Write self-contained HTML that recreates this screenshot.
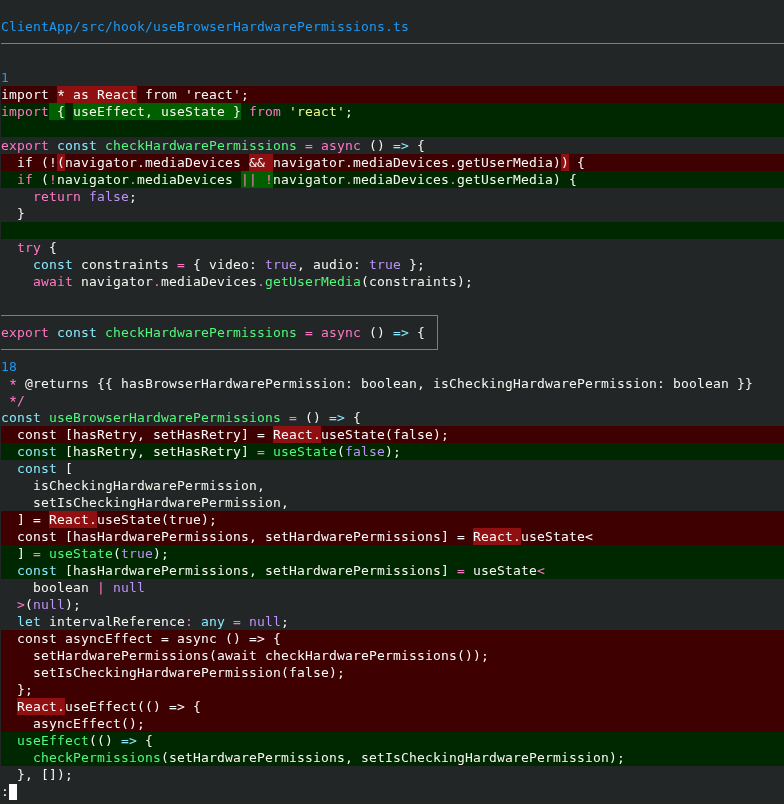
<!DOCTYPE html><html><head><meta charset="utf-8"><title>delta diff</title><style>
html,body{margin:0;padding:0;background:#232627;}
body{width:784px;height:804px;overflow:hidden;position:relative;
 font-family:"DejaVu Sans Mono","Liberation Mono",monospace;font-size:13px;line-height:17px;letter-spacing:0.1733px;color:#f8f8f2;
 -webkit-font-smoothing:antialiased;font-kerning:none;font-variant-ligatures:none;}
#t{position:absolute;left:0;top:1px;width:784px;will-change:transform;}
.r{height:17px;white-space:pre;padding-left:1px;margin-left:0;position:relative;}
.m{background:linear-gradient(#3f0001,#3f0001) 1px 0/100% 100% no-repeat;}
.a{background:linear-gradient(#002800,#002800) 1px 0/100% 100% no-repeat;}
.r span{display:inline-block;height:17px;vertical-align:top;}
.me{background:#901011;}
.ae{background:#006000;}
.w{color:#f8f8f2}.n{color:#fcfcfc}.k{color:#ff79c6}.c{color:#8be9fd}.g{color:#50fa7b}.y{color:#f1fa8c}.p{color:#bd93f9}.b{color:#1d99f3}
.hl{position:absolute;height:1px;background:#1d99f3;}
.vl{position:absolute;width:1px;background:#1d99f3;}
.hid{color:transparent;}
.ast{display:inline-block;height:17px;vertical-align:top;text-align:center;letter-spacing:0;font-weight:normal;font-family:"Liberation Mono",monospace;font-size:16px;line-height:17px;position:relative;top:4px;margin:0 -1px;width:10px;}
#cur{position:absolute;left:9px;top:784px;width:8px;height:16px;background:#fcfcfc;}
</style></head><body><div id="t">
<div class="r"></div>
<div class="r"><span class="b" style="width:408px">ClientApp/src/hook/useBrowserHardwarePermissions.ts</span></div>
<div class="r b"><span class="hid">──────────────────────────────────────────────────────────────────────────────────────────────────</span><i class="hl" style="left:1px;top:8px;width:783px"></i></div>
<div class="r"></div>
<div class="r"><span class="b" style="width:8px">1</span></div>
<div class="r m"><span class="n" style="width:56px">import </span><span class="n me" style="width:80px"><b class="ast">*</b> as React</span><span class="n" style="width:112px"> from 'react';</span></div>
<div class="r a"><span class="k" style="width:48px">import</span><span class="w ae" style="width:16px"> {</span><span class="w" style="width:8px"> </span><span class="w ae" style="width:168px">useEffect, useState }</span><span class="w" style="width:8px"> </span><span class="k" style="width:32px">from</span><span class="w" style="width:8px"> </span><span class="y" style="width:56px">'react'</span><span class="w" style="width:8px">;</span></div>
<div class="r a"></div>
<div class="r"><span class="k" style="width:48px">export</span><span class="w" style="width:8px"> </span><span class="c" style="width:40px">const</span><span class="w" style="width:8px"> </span><span class="g" style="width:192px">checkHardwarePermissions</span><span class="w" style="width:8px"> </span><span class="k" style="width:8px">=</span><span class="w" style="width:8px"> </span><span class="k" style="width:40px">async</span><span class="w" style="width:32px"> () </span><span class="c" style="width:16px">=&gt;</span><span class="w" style="width:16px"> {</span></div>
<div class="r m"><span class="n" style="width:56px">  if (!</span><span class="n me" style="width:8px">(</span><span class="n" style="width:184px">navigator.mediaDevices </span><span class="n me" style="width:24px">&amp;&amp; </span><span class="n" style="width:288px">navigator.mediaDevices.getUserMedia)</span><span class="n me" style="width:8px">)</span><span class="n" style="width:16px"> {</span></div>
<div class="r a"><span class="w" style="width:16px">  </span><span class="k" style="width:16px">if</span><span class="w" style="width:16px"> (</span><span class="k" style="width:8px">!</span><span class="w" style="width:72px">navigator</span><span class="k" style="width:8px">.</span><span class="w" style="width:104px">mediaDevices </span><span class="k ae" style="width:16px">||</span><span class="w ae" style="width:8px"> </span><span class="k ae" style="width:8px">!</span><span class="w" style="width:72px">navigator</span><span class="k" style="width:8px">.</span><span class="w" style="width:96px">mediaDevices</span><span class="k" style="width:8px">.</span><span class="w" style="width:120px">getUserMedia) {</span></div>
<div class="r"><span class="w" style="width:32px">    </span><span class="k" style="width:48px">return</span><span class="w" style="width:8px"> </span><span class="p" style="width:40px">false</span><span class="w" style="width:8px">;</span></div>
<div class="r"><span class="w" style="width:24px">  }</span></div>
<div class="r a"></div>
<div class="r"><span class="w" style="width:16px">  </span><span class="k" style="width:24px">try</span><span class="w" style="width:16px"> {</span></div>
<div class="r"><span class="w" style="width:32px">    </span><span class="c" style="width:40px">const</span><span class="w" style="width:104px"> constraints </span><span class="k" style="width:8px">=</span><span class="w" style="width:80px"> { video: </span><span class="p" style="width:32px">true</span><span class="w" style="width:72px">, audio: </span><span class="p" style="width:32px">true</span><span class="w" style="width:24px"> };</span></div>
<div class="r"><span class="w" style="width:32px">    </span><span class="k" style="width:40px">await</span><span class="w" style="width:80px"> navigator</span><span class="k" style="width:8px">.</span><span class="w" style="width:96px">mediaDevices</span><span class="k" style="width:8px">.</span><span class="g" style="width:96px">getUserMedia</span><span class="w" style="width:112px">(constraints);</span></div>
<div class="r"></div>
<div class="r b"><span class="hid">──────────────────────────────────────────────────────┐</span><i class="hl" style="left:1px;top:8px;width:437px"></i><i class="vl" style="left:437px;top:8px;height:9px"></i></div>
<div class="r"><span class="k" style="width:48px">export</span><span class="w" style="width:8px"> </span><span class="c" style="width:40px">const</span><span class="w" style="width:8px"> </span><span class="g" style="width:192px">checkHardwarePermissions</span><span class="w" style="width:8px"> </span><span class="k" style="width:8px">=</span><span class="w" style="width:8px"> </span><span class="k" style="width:40px">async</span><span class="w" style="width:32px"> () </span><span class="c" style="width:16px">=&gt;</span><span class="w" style="width:16px"> {</span><span class="hid b"> │</span><i class="vl" style="left:437px;top:0;height:17px"></i></div>
<div class="r b"><span class="hid">──────────────────────────────────────────────────────┘</span><i class="hl" style="left:1px;top:8px;width:437px"></i><i class="vl" style="left:437px;top:0;height:9px"></i></div>
<div class="r"><span class="b" style="width:16px">18</span></div>
<div class="r"><span class="w" style="width:8px"> </span><span class="k" style="width:8px"><b class="ast">*</b></span><span class="w" style="width:736px"> @returns {{ hasBrowserHardwarePermission: boolean, isCheckingHardwarePermission: boolean }}</span></div>
<div class="r"><span class="w" style="width:8px"> </span><span class="k" style="width:16px"><b class="ast">*</b>/</span></div>
<div class="r"><span class="c" style="width:40px">const</span><span class="w" style="width:8px"> </span><span class="g" style="width:232px">useBrowserHardwarePermissions</span><span class="w" style="width:8px"> </span><span class="k" style="width:8px">=</span><span class="w" style="width:32px"> () </span><span class="c" style="width:16px">=&gt;</span><span class="w" style="width:16px"> {</span></div>
<div class="r m"><span class="n" style="width:272px">  const [hasRetry, setHasRetry] = </span><span class="n me" style="width:48px">React.</span><span class="n" style="width:128px">useState(false);</span></div>
<div class="r a"><span class="w" style="width:16px">  </span><span class="c" style="width:40px">const</span><span class="w" style="width:200px"> [hasRetry, setHasRetry] </span><span class="k" style="width:8px">=</span><span class="w" style="width:8px"> </span><span class="g" style="width:64px">useState</span><span class="w" style="width:8px">(</span><span class="p" style="width:40px">false</span><span class="w" style="width:16px">);</span></div>
<div class="r"><span class="w" style="width:16px">  </span><span class="c" style="width:40px">const</span><span class="w" style="width:16px"> [</span></div>
<div class="r"><span class="w" style="width:264px">    isCheckingHardwarePermission,</span></div>
<div class="r"><span class="w" style="width:288px">    setIsCheckingHardwarePermission,</span></div>
<div class="r m"><span class="n" style="width:48px">  ] = </span><span class="n me" style="width:48px">React.</span><span class="n" style="width:120px">useState(true);</span></div>
<div class="r m"><span class="n" style="width:472px">  const [hasHardwarePermissions, setHardwarePermissions] = </span><span class="n me" style="width:48px">React.</span><span class="n" style="width:72px">useState&lt;</span></div>
<div class="r a"><span class="w" style="width:32px">  ] </span><span class="k" style="width:8px">=</span><span class="w" style="width:8px"> </span><span class="g" style="width:64px">useState</span><span class="w" style="width:8px">(</span><span class="p" style="width:32px">true</span><span class="w" style="width:16px">);</span></div>
<div class="r a"><span class="w" style="width:16px">  </span><span class="c" style="width:40px">const</span><span class="w" style="width:400px"> [hasHardwarePermissions, setHardwarePermissions] </span><span class="k" style="width:8px">=</span><span class="w" style="width:72px"> useState</span><span class="k" style="width:8px">&lt;</span></div>
<div class="r"><span class="w" style="width:96px">    boolean </span><span class="k" style="width:8px">|</span><span class="w" style="width:8px"> </span><span class="p" style="width:32px">null</span></div>
<div class="r"><span class="w" style="width:16px">  </span><span class="k" style="width:8px">&gt;</span><span class="w" style="width:8px">(</span><span class="p" style="width:32px">null</span><span class="w" style="width:16px">);</span></div>
<div class="r"><span class="w" style="width:16px">  </span><span class="c" style="width:24px">let</span><span class="w" style="width:144px"> intervalReference</span><span class="k" style="width:8px">:</span><span class="w" style="width:8px"> </span><span class="c" style="width:24px">any</span><span class="w" style="width:8px"> </span><span class="k" style="width:8px">=</span><span class="w" style="width:8px"> </span><span class="p" style="width:32px">null</span><span class="w" style="width:8px">;</span></div>
<div class="r m"><span class="n" style="width:280px">  const asyncEffect = async () =&gt; {</span></div>
<div class="r m"><span class="n" style="width:488px">    setHardwarePermissions(await checkHardwarePermissions());</span></div>
<div class="r m"><span class="n" style="width:344px">    setIsCheckingHardwarePermission(false);</span></div>
<div class="r m"><span class="n" style="width:32px">  };</span></div>
<div class="r m"><span class="n" style="width:16px">  </span><span class="n me" style="width:48px">React.</span><span class="n" style="width:136px">useEffect(() =&gt; {</span></div>
<div class="r m"><span class="n" style="width:144px">    asyncEffect();</span></div>
<div class="r a"><span class="w" style="width:16px">  </span><span class="g" style="width:72px">useEffect</span><span class="w" style="width:32px">(() </span><span class="c" style="width:16px">=&gt;</span><span class="w" style="width:16px"> {</span></div>
<div class="r a"><span class="w" style="width:32px">    </span><span class="g" style="width:128px">checkPermissions</span><span class="w" style="width:464px">(setHardwarePermissions, setIsCheckingHardwarePermission);</span></div>
<div class="r"><span class="w" style="width:72px">  }, []);</span></div>
<div class="r n">:</div>
</div><div id="cur"></div></body></html>
